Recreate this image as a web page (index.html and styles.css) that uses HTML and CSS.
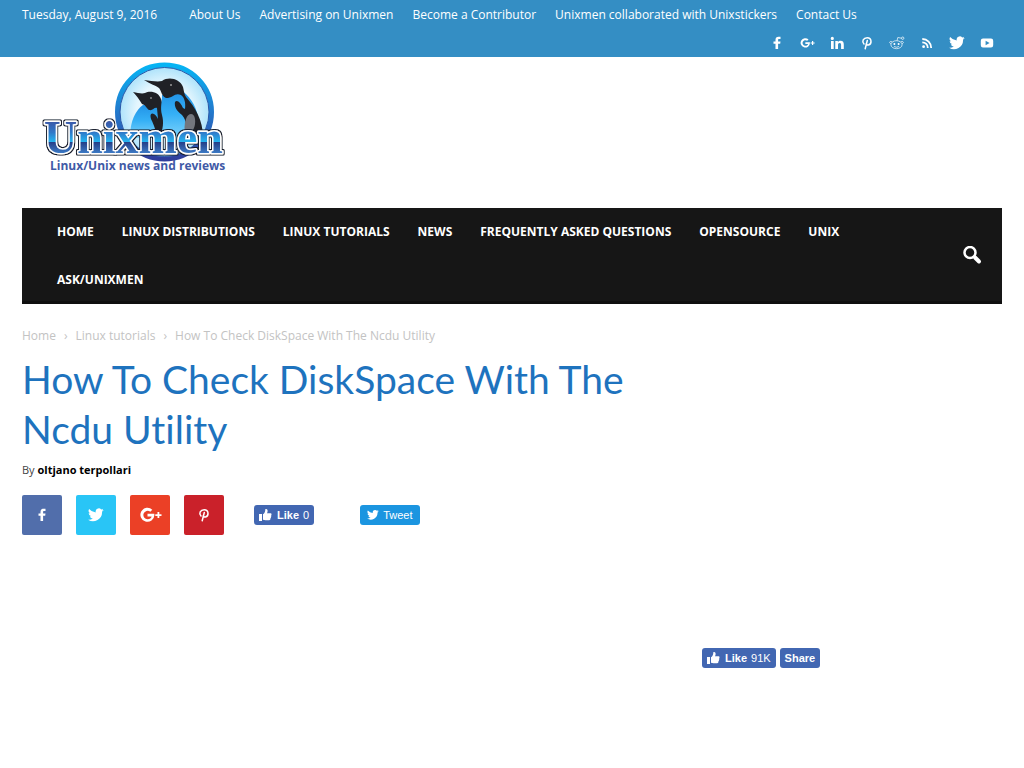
FILE: index.html
```html
<!DOCTYPE html>
<html lang="en">
<head>
<meta charset="utf-8">
<title>How To Check DiskSpace With The Ncdu Utility</title>
<link rel="stylesheet" href="styles.css">
</head>
<body>
<svg class="sprite" aria-hidden="true">
  <symbol id="facebook" viewBox="0 0 16 16"><path d="M6.500 14V8.800H4.500V6.500h2V5c0-2 1-3.200 3-3.200h2v2.300h-1.400c-.8 0-1 .3-1 .9v1.500h2.400l-.3 2.300H9.100V14z"/></symbol>
  <symbol id="gplus" viewBox="-1 0 24 16"><path d="M8.500 6.800v2.700h4.100c-.4 1.700-1.800 2.700-4 2.700A4.200 4.200 0 1 1 11.300 4.800l2-2A7 7 0 1 0 15.400 8q0-.6-.1-1.200zM18.500 5v2.200h-2.200v1.700h2.200v2.200h1.800V8.900h2.200V7.200h-2.200V5z"/></symbol>
  <symbol id="linkedin" viewBox="0 0 16 16"><path d="M2 6h2.700v8H2zM3.300 1.800a1.600 1.600 0 1 1 0 3.200 1.600 1.600 0 0 1 0-3.200M6.300 6h2.600v1.200C9.500 6.200 10.500 5.800 11.600 5.800c2.400 0 3.200 1.500 3.200 3.900V14h-2.700v-3.900c0-1.200-.3-2-1.400-2-1.200 0-1.700.8-1.700 2V14H6.300z"/></symbol>
  <symbol id="pinterest" viewBox="0 0 16 16"><path fill="none" stroke="currentColor" stroke-width="1.500" stroke-linecap="round" d="M5 9C2.500 6.300 4.300 2.700 8.200 2.700c4.800 0 4.900 6.500 1.200 7.300-1.200.2-2-.4-2.300-1.100M8.300 5.500 6.200 13.800"/></symbol>
  <symbol id="reddit" viewBox="0 0 16 16"><g fill="none" stroke="currentColor" stroke-width=".7"><ellipse cx="7.500" cy="9.700" rx="5.600" ry="4"/><path d="M8 5.700 8.800 2.500 12.500 3.200M2.100 8.800C-.5 8 .7 5.500 3.300 6.800M12.900 8.800C15.500 8 14.300 5.500 11.700 6.800M5 11.500q2.500 1.500 5 0"/><circle cx="13.700" cy="3.200" r="1.200"/></g><circle cx="5.400" cy="9" r="1"/><circle cx="9.600" cy="9" r="1"/></symbol>
  <symbol id="rss" viewBox="0 0 16 16"><circle cx="4.600" cy="11.700" r="1.400"/><path fill="none" stroke="currentColor" stroke-width="1.800" d="M3.300 7.300a5.500 5.500 0 0 1 5.500 5.700M3.300 4A8.900 8.900 0 0 1 12.200 13"/></symbol>
  <symbol id="twitter" viewBox="0 0 24 20"><path d="M23.500 2.400a9.600 9.600 0 0 1-2.800.8A4.800 4.800 0 0 0 22.800.500a9.600 9.600 0 0 1-3 1.200 4.800 4.800 0 0 0-8.200 4.400A13.700 13.700 0 0 1 1.700 1a4.800 4.800 0 0 0 1.500 6.500A4.800 4.800 0 0 1 1 6.900a4.800 4.800 0 0 0 3.900 4.800 4.800 4.800 0 0 1-2.200.1 4.800 4.800 0 0 0 4.500 3.300A9.700 9.700 0 0 1 .1 17.100a13.700 13.700 0 0 0 21-12.200 9.800 9.800 0 0 0 2.400-2.500z"/></symbol>
  <symbol id="youtube" viewBox="0 0 16 16"><path fill-rule="evenodd" d="M4 3.500h8A2.200 2.200 0 0 1 14.200 5.700v4.600A2.200 2.200 0 0 1 12 12.500H4a2.200 2.200 0 0 1-2.200-2.200V5.700A2.200 2.200 0 0 1 4 3.500M6.600 5.700v4.600L10.600 8z"/></symbol>
  <symbol id="thumb" viewBox="1 0 14 14"><path d="M1 6h3v7H1zM5 6.200C6.600 5.200 7.300 3.800 7.300 1.200c1.700-.7 2.700.8 2.200 2.700L9 5.300h3.600c1.100 0 1.200 1.400.5 1.900.5.500.4 1.300-.3 1.700.4.600.1 1.400-.5 1.600.3 1-.3 1.700-1.100 1.700H7.500L5 11.700z"/></symbol>
</svg>

<header>
  <div class="topbar">
    <div class="wrap topbar-row">
      <time datetime="2016-08-09">Tuesday, August 9, 2016</time>
      <nav class="top-links" aria-label="Site">
        <a href="#">About Us</a>
        <a href="#">Advertising on Unixmen</a>
        <a href="#">Become a Contributor</a>
        <a href="#">Unixmen collaborated with Unixstickers</a>
        <a href="#">Contact Us</a>
      </nav>
    </div>
    <nav class="wrap social" aria-label="Social">
      <a href="#" aria-label="Facebook"><svg><use href="#facebook"/></svg></a>
      <a href="#" aria-label="Google+"><svg><use href="#gplus"/></svg></a>
      <a href="#" aria-label="LinkedIn"><svg><use href="#linkedin"/></svg></a>
      <a href="#" aria-label="Pinterest"><svg><use href="#pinterest"/></svg></a>
      <a href="#" aria-label="Reddit"><svg><use href="#reddit"/></svg></a>
      <a href="#" aria-label="RSS"><svg><use href="#rss"/></svg></a>
      <a href="#" aria-label="Twitter"><svg><use href="#twitter"/></svg></a>
      <a href="#" aria-label="YouTube"><svg><use href="#youtube"/></svg></a>
    </nav>
  </div>

  <div class="wrap">
    <a class="logo" href="#" aria-label="Unixmen">
      <svg viewBox="0 0 190 116" width="190" height="116">
        <defs>
          <linearGradient id="ring" x2="0" y2="1"><stop offset="0" stop-color="#06b4f4"/><stop offset=".5" stop-color="#2379cc"/><stop offset="1" stop-color="#303e9c"/></linearGradient>
          <radialGradient id="sky"><stop offset="0" stop-color="#fff"/><stop offset=".6" stop-color="#e4f6fe"/><stop offset="1" stop-color="#a6e0fa"/></radialGradient>
          <linearGradient id="belly" x2="0" y2="1"><stop offset="0" stop-color="#1f8fe4"/><stop offset=".5" stop-color="#35b0f6"/><stop offset="1" stop-color="#7fd3fb"/></linearGradient>
          <linearGradient id="word" x2="0" y2="1"><stop offset=".2" stop-color="#3a5aaa"/><stop offset=".4" stop-color="#2f78c8"/><stop offset=".58" stop-color="#25b4f0"/><stop offset=".59" stop-color="#263f87"/><stop offset=".8" stop-color="#3b79c4"/></linearGradient>
          <filter id="outline" x="-5%" y="-10%" width="110%" height="120%"><feMorphology in="SourceAlpha" operator="dilate" radius="1" result="d"/><feFlood flood-color="#151b2c"/><feComposite in2="d" operator="in"/><feMerge><feMergeNode/><feMergeNode in="SourceGraphic"/></feMerge></filter>
        </defs>
        <circle cx="125.500" cy="52" r="47" fill="url(#sky)" stroke="url(#ring)" stroke-width="5"/>
        <circle cx="125.500" cy="52" r="44.500" fill="none" stroke="#2b58a8"/>
        <path fill="url(#belly)" d="M104 45C97 50 91 60 91 78h33l-2-33-12-2z"/>
        <path fill="#202126" d="M94 32c5 1 9 2 12 1 5-3 14-1 16 6 2 6 2 9 2 15v24h-7c0-9-2-12-4-17-3-6-1-9 2-7 2 1 3 3 4 5l-1-11c-3-1-4 3-8 2-3-2-3-5-7-6-3-5-6-9-9-12z"/>
        <path fill="url(#belly)" d="M123 35l19-5c7 5 15 14 17 27v21h-38c3-9 4-16 2-23-2-8 0-12 0-20z"/>
        <path fill="#202126" d="M105 20c7 1 14 2 18 1 7-5 18-2 21 6 1 4 1 7 3 10 9 10 17 23 17 40h-20c4-10 4-16-1-22-5-4-8-8-7-13 2-3 6 1 8 6l2 1c1-7-1-12-4-14-6-3-8 3-15 3-4-1-5-8-7-10-4-3-9-4-15-8z"/>
        <path fill="#73767d" d="M147 59c2-6 8-7 9 0s-2 14-9 17c-2-6-2-11 0-17z"/>
        <circle cx="132" cy="25" r="1" fill="#999"/><circle cx="112" cy="38" r="1" fill="#888"/>
        <text class="logo-word" x="5" y="93">Unixmen</text>
        <text class="logo-tag" x="11" y="110">Linux/Unix news and reviews</text>
      </svg>
    </a>
  </div>

  <div class="wrap">
    <div class="menu">
      <nav class="menu-links" aria-label="Main">
        <a href="#">HOME</a>
        <a href="#">LINUX DISTRIBUTIONS</a>
        <a href="#">LINUX TUTORIALS</a>
        <a href="#">NEWS</a>
        <a href="#">FREQUENTLY ASKED QUESTIONS</a>
        <a href="#">OPENSOURCE</a>
        <a href="#">UNIX</a>
        <a href="#">ASK/UNIXMEN</a>
      </nav>
      <button class="search" type="button" aria-label="Search">
        <svg viewBox="0 0 20 20"><g fill="none" stroke="currentColor"><circle cx="8" cy="6.500" r="5.500" stroke-width="2.500"/><path d="M13 11.500l4 4" stroke-width="4" stroke-linecap="round"/></g></svg>
      </button>
    </div>
  </div>
</header>

<main class="wrap content">
  <article>
    <nav class="crumbs" aria-label="Breadcrumb"><a href="#">Home</a><span>›</span><a href="#">Linux tutorials</a><span>›</span><span class="here">How To Check DiskSpace With The Ncdu Utility</span></nav>
    <h1>How To Check DiskSpace With The Ncdu Utility</h1>
    <p class="byline">By <a href="#">oltjano terpollari</a></p>
    <div class="share">
      <a class="tile fb" href="#" aria-label="Share on Facebook"><svg><use href="#facebook"/></svg></a>
      <a class="tile tw" href="#" aria-label="Share on Twitter"><svg><use href="#twitter"/></svg></a>
      <a class="tile gp" href="#" aria-label="Share on Google+"><svg><use href="#gplus"/></svg></a>
      <a class="tile pin" href="#" aria-label="Share on Pinterest"><svg><use href="#pinterest"/></svg></a>
      <div class="widgets">
        <button class="pill" type="button"><svg><use href="#thumb"/></svg><b>Like</b><span>0</span></button>
        <button class="pill tweet" type="button"><svg><use href="#twitter"/></svg><span>Tweet</span></button>
      </div>
    </div>
  </article>
  <aside>
    <button class="pill" type="button"><svg><use href="#thumb"/></svg><b>Like</b><span>91K</span></button>
    <button class="pill" type="button"><b>Share</b></button>
  </aside>
</main>
</body>
</html>
```

FILE: styles.css
```css
* { box-sizing: border-box; }
body {
  margin: 0;
  background: #fff;
  color: #444;
  font-family: "Open Sans", "Noto Sans", sans-serif;
  font-size: 12px;
}
a { color: inherit; text-decoration: none; }
svg { display: block; fill: currentColor; }
button { border: 0; padding: 0; font: inherit; cursor: pointer; }
.sprite { position: absolute; width: 0; height: 0; }
.wrap { padding: 0 22px; }

.topbar { background: #348ec4; color: #fff; padding-top: 1px; }
.topbar-row { display: flex; gap: 32px; line-height: 28px; }
.top-links { display: flex; flex-wrap: wrap; gap: 0 19px; }
.social { display: flex; justify-content: flex-end; }
.social a { width: 30px; height: 28px; display: grid; place-items: center; }
.social svg { width: 16px; height: 16px; }

.logo { display: block; width: fit-content; padding: 3px 0 32px 17px; }
.logo-word {
  font: bold 46px "Liberation Serif", serif;
  fill: url(#word);
  stroke: #fff;
  stroke-width: 3px;
  stroke-linejoin: round;
  paint-order: stroke;
  filter: url(#outline);
}
.logo-tag { font: bold 12px "Open Sans", sans-serif; fill: #3f5aa6; }

.menu {
  display: flex;
  align-items: center;
  background: #161616;
  box-shadow: inset 0 -3px #0f0f0f;
  color: #fff;
}
.menu-links {
  flex: 1;
  display: flex;
  flex-wrap: wrap;
  padding: 0 80px 0 21px;
  font-weight: 700;
}
.menu-links a { padding: 0 14px; line-height: 48px; }
.search { width: 60px; height: 48px; display: grid; place-items: center; background: none; color: #fff; }
.search svg { width: 20px; height: 20px; }

.content { display: grid; grid-template-columns: 632px 1fr; gap: 48px; }
.crumbs { display: flex; gap: 8px; padding-top: 22px; line-height: 20px; color: #c3c3c3; }
h1 {
  margin: 8px 0 0;
  color: #1e73be;
  font: 400 39px/50px Lato, sans-serif;
  font-variant-ligatures: none;
}
.byline { margin: 7px 0 0; font-size: 11px; line-height: 18px; }
.byline a { color: #000; font-weight: 700; }
.share { display: flex; gap: 14px; margin-top: 16px; }
.tile { width: 40px; height: 40px; border-radius: 2px; color: #fff; display: grid; place-items: center; }
.tile svg { width: 16px; height: 16px; }
.fb { background: #516eab; }
.tw { background: #29c5f6; }
.gp { background: #eb4026; }
.gp svg { width: 24px; }
.pin { background: #ca212a; }
.widgets { display: flex; align-items: center; gap: 46px; padding-left: 16px; }
.pill {
  display: flex;
  align-items: center;
  gap: 4px;
  height: 20px;
  padding: 0 5px;
  border-radius: 3px;
  background: #4267b2;
  color: #fff;
  font: 11px "Liberation Sans", Arial, sans-serif;
}
.pill svg { width: 14px; height: 14px; }
.tweet { background: #1b95e0; padding: 0 7px; }
.tweet svg { width: 12px; }
aside { display: flex; align-items: flex-start; gap: 4px; padding-top: 344px; }
```
